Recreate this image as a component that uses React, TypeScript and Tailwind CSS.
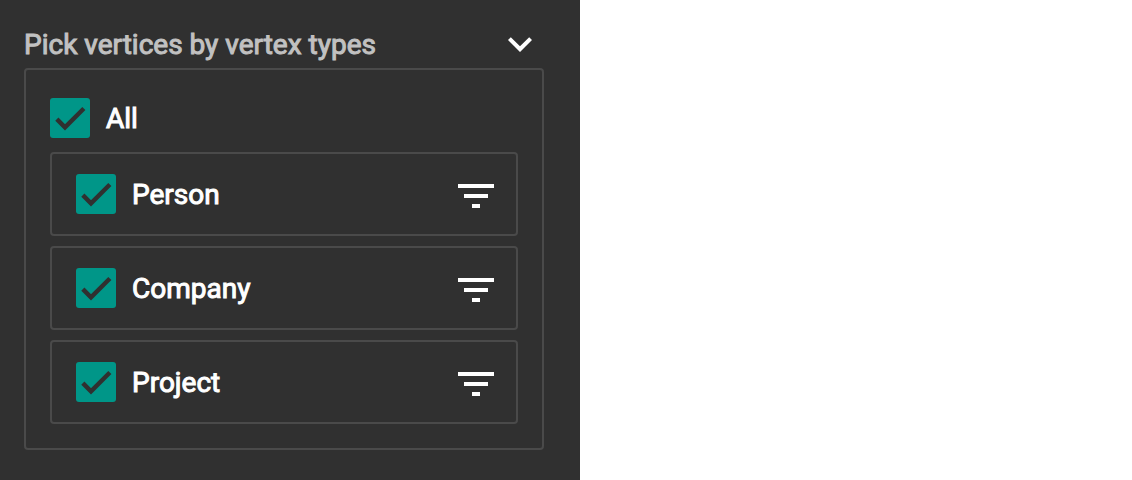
import { useState } from "react";

type CheckItemProps = {
  label: string;
  checked: boolean;
  onChange: (checked: boolean) => void;
};

function CheckItem({ label, checked, onChange }: CheckItemProps) {
  return (
    <label className="flex cursor-pointer items-center gap-4 text-[28px] leading-9 text-white [-webkit-text-stroke:1px]">
      <span className="grid size-10 shrink-0">
        <input
          type="checkbox"
          checked={checked}
          onChange={(e) => onChange(e.target.checked)}
          className="peer col-start-1 row-start-1 size-10 cursor-pointer appearance-none rounded-[3px] border-4 border-white/70 checked:border-0 checked:bg-[#009688]"
        />
        <svg
          viewBox="0 0 24 24"
          aria-hidden="true"
          className="pointer-events-none invisible col-start-1 row-start-1 size-10 peer-checked:visible"
        >
          <path d="M4.1 12.7L9 17.6 20.3 6.3" fill="none" stroke="#303030" strokeWidth="2.67" />
        </svg>
      </span>
      <span className="pt-0.5">{label}</span>
    </label>
  );
}

const vertexTypes = ["Person", "Company", "Project"];

export default function App() {
  const [open, setOpen] = useState(true);
  const [picked, setPicked] = useState<string[]>(vertexTypes);

  const toggle = (name: string, on: boolean) =>
    setPicked(on ? [...picked, name] : picked.filter((n) => n !== name));

  return (
    <main className="min-h-screen bg-white font-['Roboto',sans-serif]">
      <section className="min-h-screen w-[580px] max-w-full bg-[#303030] pt-5 pr-9 pb-7 pl-6">
        <header className="flex h-12 items-center justify-between">
          <h2 className="pt-0.5 text-[28px] leading-9 text-[#c1c1c1] [-webkit-text-stroke:1px]">
            Pick vertices by vertex types
          </h2>
          <button
            type="button"
            aria-label="Toggle vertex types"
            aria-expanded={open}
            onClick={() => setOpen(!open)}
            className="size-12 cursor-pointer text-white"
          >
            <svg viewBox="0 0 24 24" fill="currentColor" className="size-12">
              <path d="M16.59 8.59L12 13.17 7.41 8.59 6 10l6 6 6-6z" />
            </svg>
          </button>
        </header>
        {open && (
          <div className="rounded-sm border-2 border-[#4a4a4a] px-6 pt-7 pb-6">
            <CheckItem
              label="All"
              checked={picked.length === vertexTypes.length}
              onChange={(on) => setPicked(on ? vertexTypes : [])}
            />
            <ul className="mt-3.5 flex flex-col gap-2.5">
              {vertexTypes.map((name) => (
                <li
                  key={name}
                  className="flex items-center justify-between rounded-sm border-2 border-[#4a4a4a] py-3.5 pr-4 pl-6"
                >
                  <CheckItem
                    label={name}
                    checked={picked.includes(name)}
                    onChange={(on) => toggle(name, on)}
                  />
                  <button type="button" aria-label={`Filter ${name}`} className="cursor-pointer pt-1 text-white">
                    <svg viewBox="0 0 24 24" fill="currentColor" className="size-12">
                      <path d="M10 18h4v-2h-4v2zM3 6v2h18V6H3zm3 7h12v-2H6v2z" />
                    </svg>
                  </button>
                </li>
              ))}
            </ul>
          </div>
        )}
      </section>
    </main>
  );
}
